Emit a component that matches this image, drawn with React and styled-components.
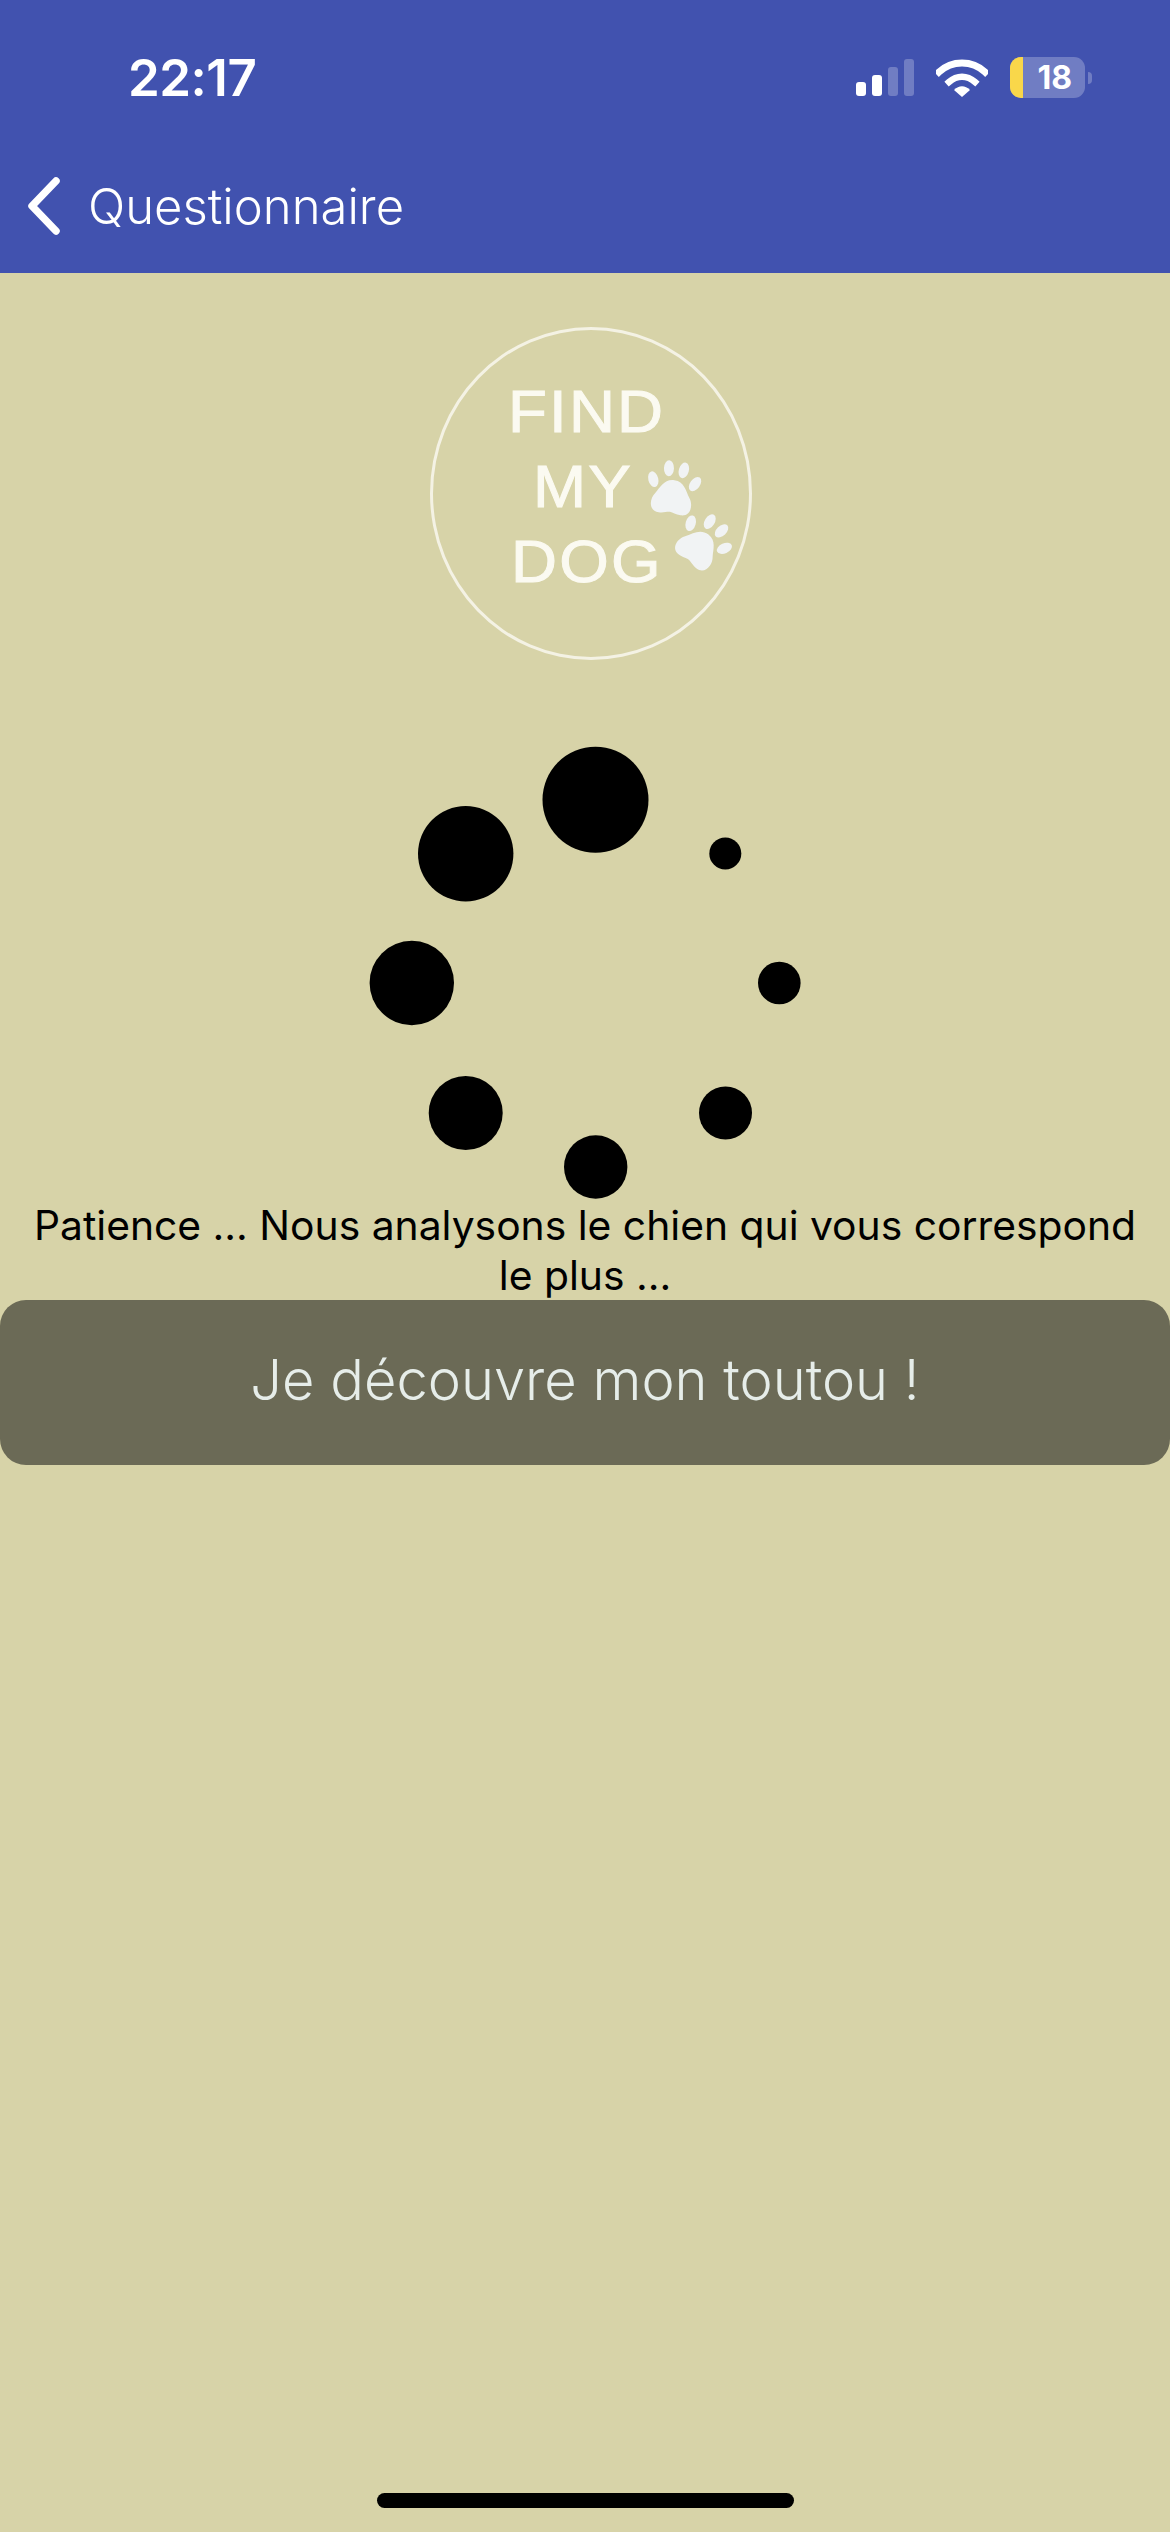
import React from 'react'
import styled, { createGlobalStyle } from 'styled-components'

const GlobalStyle = createGlobalStyle`
  html, body {
    margin: 0;
    padding: 0;
    background: #d7d3a8;
  }
  * {
    box-sizing: border-box;
  }
`

const dots = [
  { cx: 245.5, cy: 69.7, r: 53 },
  { cx: 375.3, cy: 123.5, r: 16 },
  { cx: 429.3, cy: 253, r: 21.3 },
  { cx: 375.5, cy: 383, r: 26.5 },
  { cx: 245.7, cy: 437, r: 31.7 },
  { cx: 115.7, cy: 383, r: 37 },
  { cx: 61.8, cy: 253, r: 42.2 },
  { cx: 115.7, cy: 123.7, r: 47.7 },
]

function Paw({ x, y, rotate }) {
  return (
    <g transform={`translate(${x} ${y}) rotate(${rotate})`} fill="#f1f3f4">
      <path d="M0 -17 C10 -17 13 -8 17 -2 C22 4 22 17 11 17 C6 17 3 15 0 15 C-3 15 -6 17 -11 17 C-22 17 -22 4 -17 -2 C-13 -8 -10 -17 0 -17 Z" />
      <ellipse cx="-21" cy="-15" rx="5" ry="8" transform="rotate(-22 -21 -15)" />
      <ellipse cx="-7" cy="-28" rx="5" ry="8" transform="rotate(-6 -7 -28)" />
      <ellipse cx="8" cy="-28" rx="5" ry="8" transform="rotate(8 8 -28)" />
      <ellipse cx="21" cy="-16" rx="5" ry="8" transform="rotate(28 21 -16)" />
    </g>
  )
}

function App() {
  return (
    <Page>
      <GlobalStyle />
      <Header>
        <StatusBar>
          <Clock>22:17</Clock>
          <StatusIcons>
            <svg width="58" height="38" viewBox="0 0 58 38">
              <rect x="0" y="23" width="10" height="14" rx="3" fill="#fff" />
              <rect x="16" y="16" width="10" height="21" rx="3" fill="#fff" />
              <rect x="32" y="8" width="10" height="29" rx="3" fill="#fff" fillOpacity="0.25" />
              <rect x="48" y="0" width="10" height="37" rx="3" fill="#fff" fillOpacity="0.25" />
            </svg>
            <svg width="52" height="38" viewBox="0 0 52 38">
              <path d="M3 13 C16 1 36 1 49 13" fill="none" stroke="#fff" strokeWidth="7" strokeLinecap="square" />
              <path d="M13 23 C21 16 31 16 39 23" fill="none" stroke="#fff" strokeWidth="6.5" strokeLinecap="square" />
              <path d="M18 31 C23 26 29 26 34 31 L26 38 Z" fill="#fff" />
            </svg>
            <Battery>
              <BatteryBody>
                <BatteryLevel />
                <BatteryText>18</BatteryText>
              </BatteryBody>
              <BatteryCap />
            </Battery>
          </StatusIcons>
        </StatusBar>
        <NavBar>
          <svg width="36" height="60" viewBox="0 0 36 60">
            <path d="M30 5 L6 30 L30 55" fill="none" stroke="#fff" strokeWidth="7.5" strokeLinecap="round" strokeLinejoin="round" />
          </svg>
          <NavTitle>Questionnaire</NavTitle>
        </NavBar>
      </Header>
      <Content>
        <Logo>
          <LogoCircle>
            <LogoWord $left={75} $top={52}>FIND</LogoWord>
            <LogoWord $left={100} $top={127}>MY</LogoWord>
            <LogoWord $left={78} $top={202}>DOG</LogoWord>
            <PawLayer viewBox="0 0 316 327">
              <Paw x={239} y={167} rotate={8} />
              <Paw x={265} y={218} rotate={38} />
            </PawLayer>
          </LogoCircle>
        </Logo>
        <Spinner>
          <svg width="473" height="470" viewBox="0 0 473 470">
            {dots.map((d) => (
              <circle key={`${d.cx}-${d.cy}`} cx={d.cx} cy={d.cy} r={d.r} fill="#000" />
            ))}
          </svg>
        </Spinner>
        <Message>Patience ... Nous analysons le chien qui vous correspond le plus ...</Message>
        <RevealButton>Je découvre mon toutou !</RevealButton>
      </Content>
      <HomeIndicator />
    </Page>
  )
}

export default App

const Page = styled.div`
  position: relative;
  width: 1170px;
  height: 2532px;
  overflow: hidden;
  display: flex;
  flex-direction: column;
  background: #d7d3a8;
  font-family: Inter, "Liberation Sans", sans-serif;
`

const Header = styled.header`
  height: 273px;
  background: #4152af;
  color: #fff;
  display: flex;
  flex-direction: column;
`

const StatusBar = styled.div`
  height: 175px;
  display: flex;
  justify-content: space-between;
  align-items: flex-start;
  padding: 52px 78px 0 128px;
`

const Clock = styled.div`
  font-size: 51px;
  line-height: 52px;
  font-weight: 600;
  letter-spacing: -0.5px;
`

const StatusIcons = styled.div`
  display: flex;
  align-items: center;
  gap: 22px;
  height: 41px;
  margin-top: 5px;
`

const Battery = styled.div`
  display: flex;
  align-items: center;
  gap: 3px;
`

const BatteryBody = styled.div`
  position: relative;
  width: 75px;
  height: 41px;
  border-radius: 11px;
  overflow: hidden;
  background: rgba(255, 255, 255, 0.25);
  display: flex;
  align-items: center;
  justify-content: flex-end;
  padding-right: 13px;
`

const BatteryLevel = styled.div`
  position: absolute;
  left: 0;
  top: 0;
  bottom: 0;
  width: 13px;
  background: #f9d74a;
`

const BatteryText = styled.span`
  position: relative;
  font-size: 32px;
  font-weight: 700;
  color: #fff;
`

const BatteryCap = styled.div`
  width: 4px;
  height: 12px;
  border-radius: 0 6px 6px 0;
  background: rgba(255, 255, 255, 0.25);
`

const NavBar = styled.div`
  display: flex;
  align-items: center;
  gap: 26px;
  height: 62px;
  padding-left: 26px;
`

const NavTitle = styled.div`
  font-size: 49px;
  font-weight: 300;
  line-height: 60px;
  padding-top: 2px;
  color: #fff;
`

const Content = styled.main`
  display: flex;
  flex-direction: column;
`

const Logo = styled.div`
  display: flex;
  justify-content: center;
  padding-top: 54px;
`

const LogoCircle = styled.div`
  position: relative;
  width: 322px;
  height: 333px;
  margin-left: 12px;
  border: 3px solid #f4f2e4;
  border-radius: 50%;
`

const LogoWord = styled.span`
  position: absolute;
  left: ${(p) => p.$left}px;
  top: ${(p) => p.$top}px;
  font-family: "Liberation Sans", sans-serif;
  font-size: 59px;
  line-height: 60px;
  color: #fbfaf1;
  letter-spacing: 2px;
  -webkit-text-stroke: 1px #fbfaf1;
  transform: scaleX(1.08);
  transform-origin: left center;
  filter: blur(0.5px);
`

const PawLayer = styled.svg`
  position: absolute;
  left: 0;
  top: 0;
  width: 100%;
  height: 100%;
`

const Spinner = styled.div`
  display: flex;
  height: 540px;
  padding: 70px 0 0 350px;
`

const Message = styled.p`
  margin: 0;
  padding: 0 20px;
  text-align: center;
  font-size: 40.8px;
  line-height: 50px;
  color: #000;
`

const RevealButton = styled.button`
  display: block;
  width: 100%;
  height: 165px;
  padding: 0 0 6px;
  border: 0;
  border-radius: 26px;
  background: #6b6a56;
  color: #e6ede9;
  font-family: Inter, "Liberation Sans", sans-serif;
  font-size: 56px;
  font-weight: 300;
`

const HomeIndicator = styled.div`
  position: absolute;
  left: 377px;
  top: 2493px;
  width: 417px;
  height: 15px;
  border-radius: 8px;
  background: #000;
`
